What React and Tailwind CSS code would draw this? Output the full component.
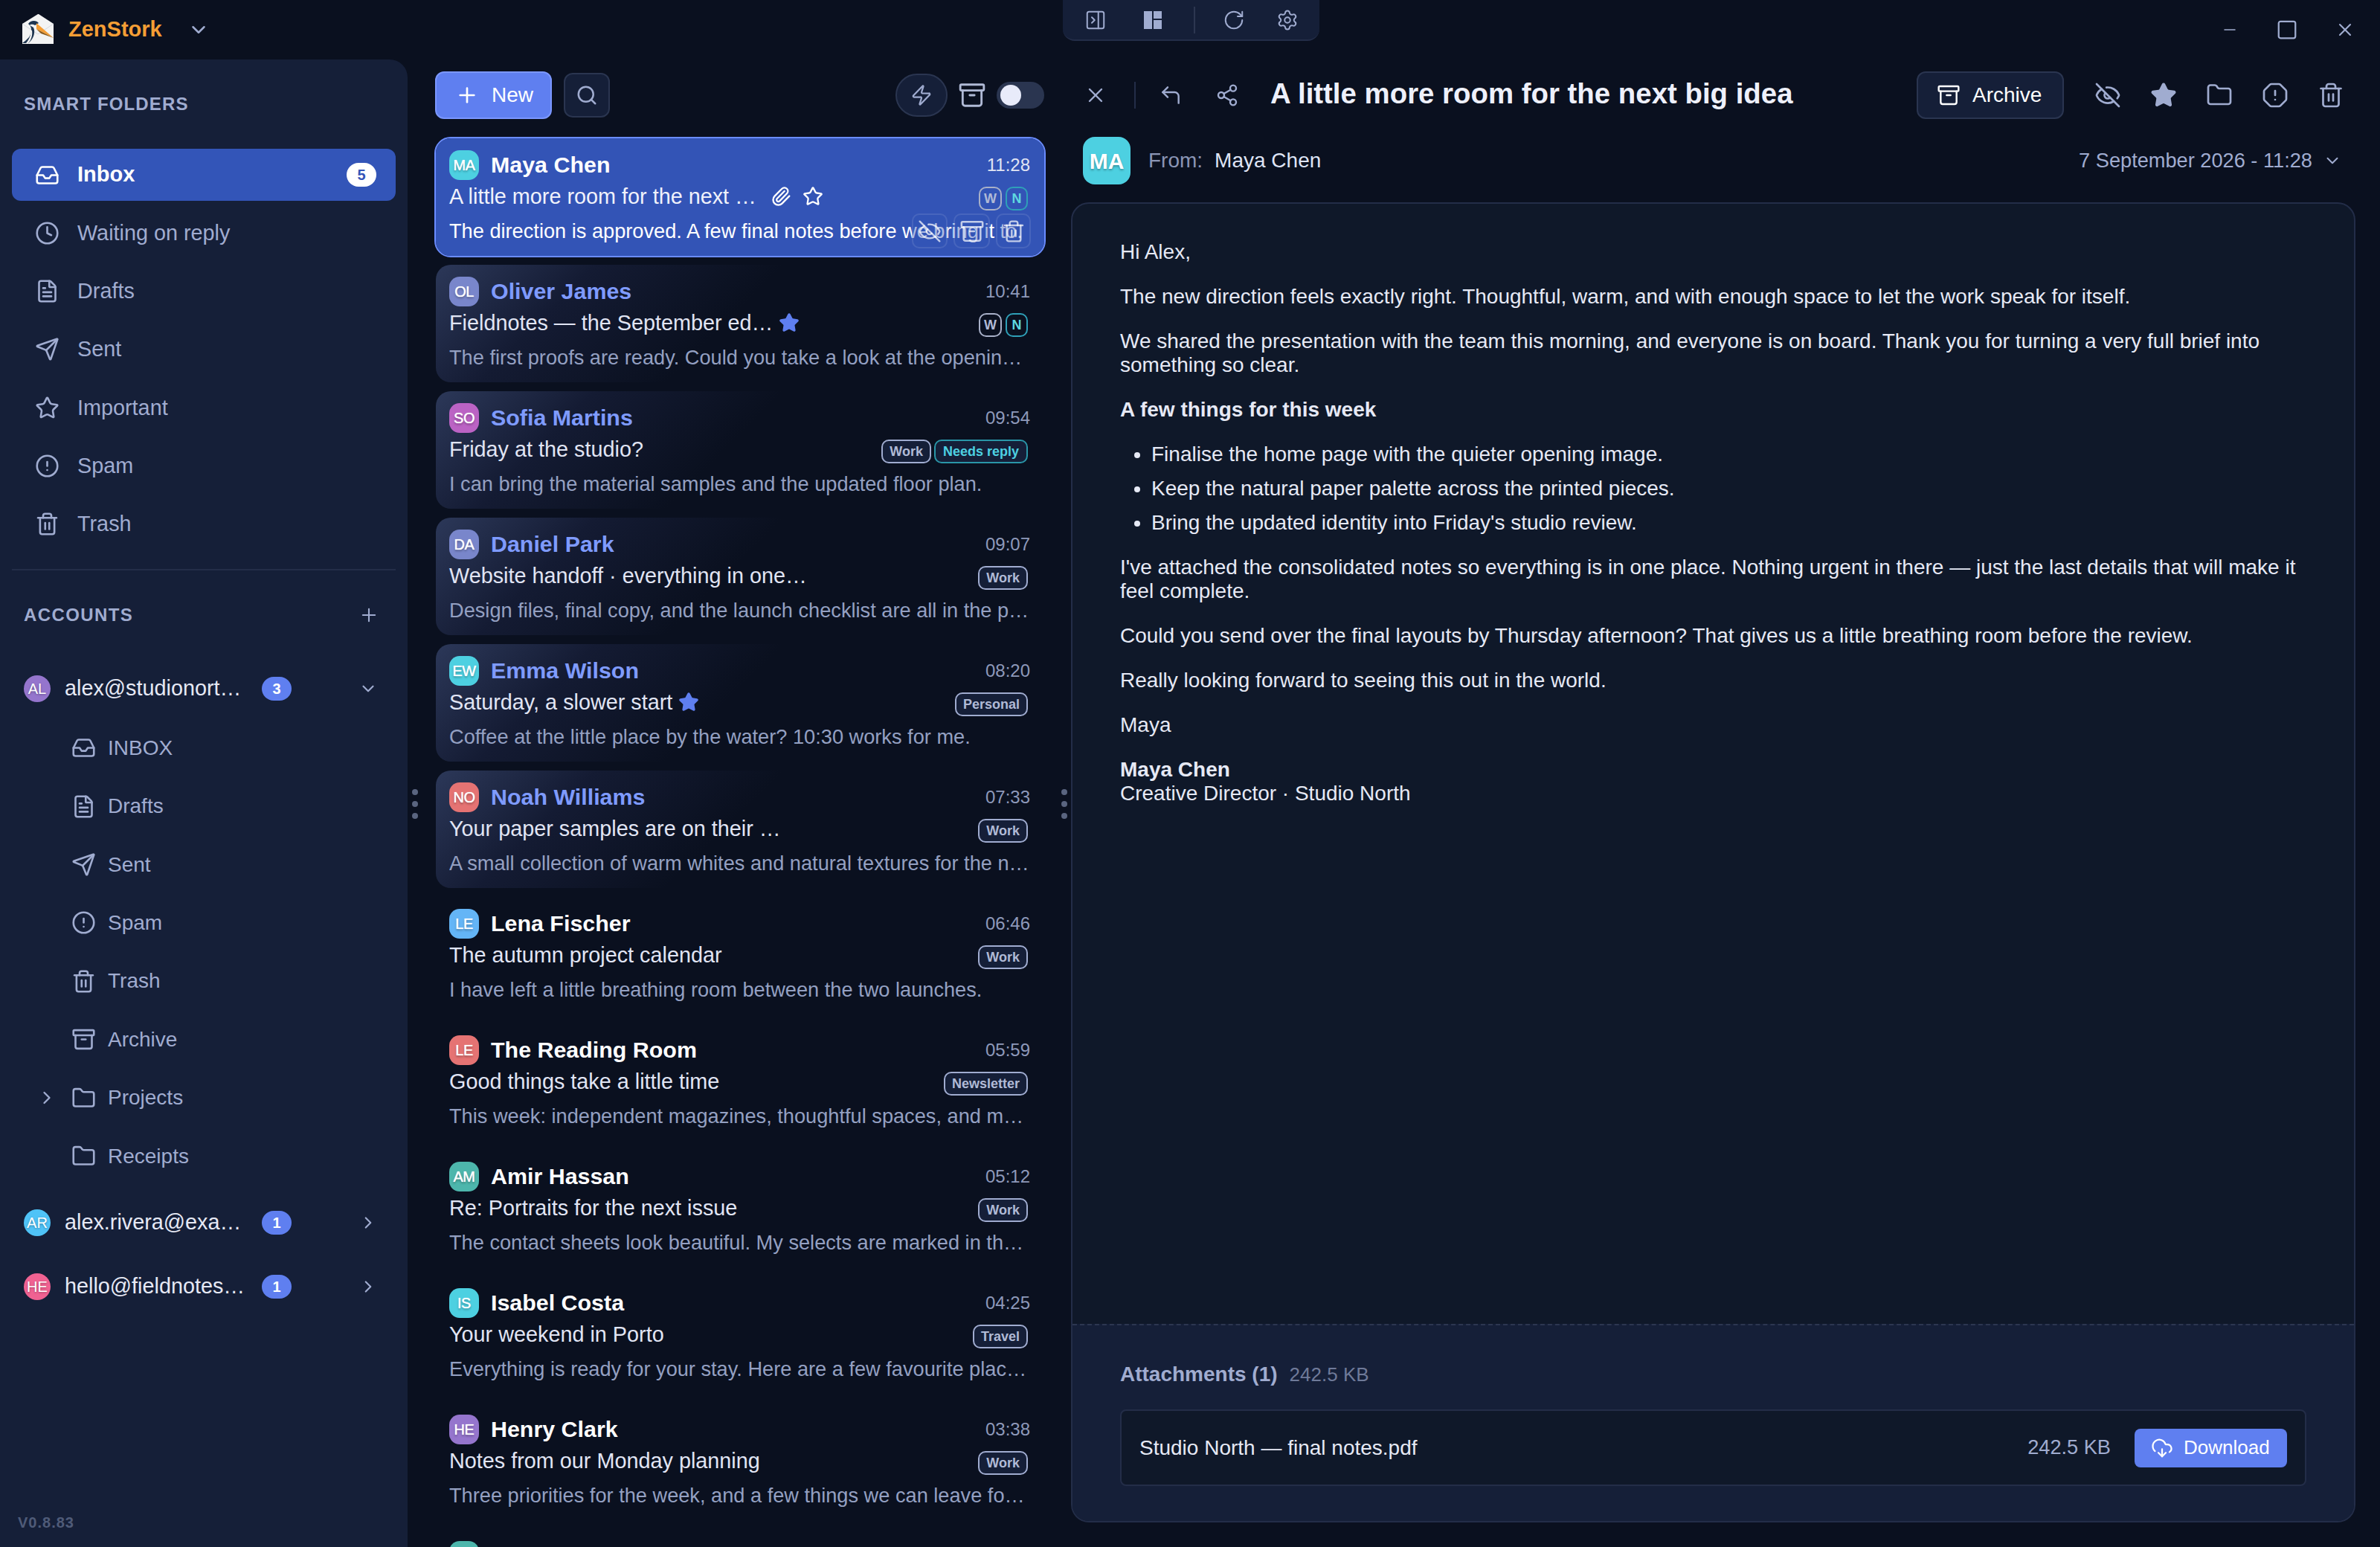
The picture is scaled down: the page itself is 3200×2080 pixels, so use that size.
import React from 'react';
import {
  Archive, ChevronDown, ChevronRight, CircleAlert, Clock, CloudDownload, CornerUpLeft, EyeOff, FileText, Folder,
  Inbox, Minus, OctagonAlert, PanelRightClose, Paperclip, Plus, RotateCw, Search, Send, Settings, Share2, Square,
  Star, Trash2, X, Zap,
} from 'lucide-react';

const smartFolders = [
  { label: 'Waiting on reply', icon: Clock },
  { label: 'Drafts', icon: FileText },
  { label: 'Sent', icon: Send },
  { label: 'Important', icon: Star },
  { label: 'Spam', icon: CircleAlert },
  { label: 'Trash', icon: Trash2 },
];

const accountFolders = [
  { label: 'INBOX', icon: Inbox },
  { label: 'Drafts', icon: FileText },
  { label: 'Sent', icon: Send },
  { label: 'Spam', icon: CircleAlert },
  { label: 'Trash', icon: Trash2 },
  { label: 'Archive', icon: Archive },
  { label: 'Projects', icon: Folder, expandable: true },
  { label: 'Receipts', icon: Folder },
];

const emails = [
  { id: 2, name: 'Oliver James', initials: 'OL', color: 'bg-[#7986cb]', time: '10:41', subject: 'Fieldnotes — the September ed…', preview: 'The first proofs are ready. Could you take a look at the openin…', unread: true, star: true, chips: true },
  { id: 3, name: 'Sofia Martins', initials: 'SO', color: 'bg-[#bb63c4]', time: '09:54', subject: 'Friday at the studio?', preview: 'I can bring the material samples and the updated floor plan.', unread: true, tags: ['Work', 'Needs reply'] },
  { id: 4, name: 'Daniel Park', initials: 'DA', color: 'bg-[#7986cb]', time: '09:07', subject: 'Website handoff · everything in one…', preview: 'Design files, final copy, and the launch checklist are all in the p…', unread: true, tags: ['Work'] },
  { id: 5, name: 'Emma Wilson', initials: 'EW', color: 'bg-[#4dd0e1]', time: '08:20', subject: 'Saturday, a slower start', preview: 'Coffee at the little place by the water? 10:30 works for me.', unread: true, star: true, tags: ['Personal'] },
  { id: 6, name: 'Noah Williams', initials: 'NO', color: 'bg-[#e57373]', time: '07:33', subject: 'Your paper samples are on their …', preview: 'A small collection of warm whites and natural textures for the n…', unread: true, tags: ['Work'] },
  { id: 7, name: 'Lena Fischer', initials: 'LE', color: 'bg-[#64b5f6]', time: '06:46', subject: 'The autumn project calendar', preview: 'I have left a little breathing room between the two launches.', tags: ['Work'] },
  { id: 8, name: 'The Reading Room', initials: 'LE', color: 'bg-[#e57373]', time: '05:59', subject: 'Good things take a little time', preview: 'This week: independent magazines, thoughtful spaces, and m…', tags: ['Newsletter'] },
  { id: 9, name: 'Amir Hassan', initials: 'AM', color: 'bg-[#4db6ac]', time: '05:12', subject: 'Re: Portraits for the next issue', preview: 'The contact sheets look beautiful. My selects are marked in th…', tags: ['Work'] },
  { id: 10, name: 'Isabel Costa', initials: 'IS', color: 'bg-[#4dd0e1]', time: '04:25', subject: 'Your weekend in Porto', preview: 'Everything is ready for your stay. Here are a few favourite plac…', tags: ['Travel'] },
  { id: 11, name: 'Henry Clark', initials: 'HE', color: 'bg-[#9575cd]', time: '03:38', subject: 'Notes from our Monday planning', preview: 'Three priorities for the week, and a few things we can leave fo…', tags: ['Work'] },
];

function Logo() {
  return (
    <svg width="46" height="44" viewBox="0 0 46 44">
      <path d="M1 14 22 1l1 0 20 13v27H1z" fill="#f3f3f3" />
      <path d="M1 14l21 14 21-14" fill="none" stroke="#d5d8de" strokeWidth="1" />
      <path d="M9 14c3-5 11-5 14-1l-5 3c-4-2-6-1-7 0z" fill="#1e3550" />
      <path d="M11 16c3 4 3 10-1 16-3 3-6 6-9 8h8c5-4 9-10 8-18l-1-3z" fill="#1e3550" />
      <path d="M12 22c1 6-1 12-6 18h3c4-4 6-11 5-17z" fill="#f3f3f3" />
      <path d="M20 13 43 33 20 21z" fill="#f59e35" />
      <path d="M20 21 43 33 26 27z" fill="#8a5a1c" />
    </svg>
  );
}

function Dots({ className }) {
  return (
    <div className={`flex flex-col gap-2 ${className}`}>
      <span className="w-2 h-2 rounded-full bg-[#5a6580]" />
      <span className="w-2 h-2 rounded-full bg-[#5a6580]" />
      <span className="w-2 h-2 rounded-full bg-[#5a6580]" />
    </div>
  );
}

function TitleBar() {
  return (
    <div className="h-[80px] flex shrink-0">
      <div className="w-[1429px] flex items-center pl-[29px]">
        <Logo />
        <span className="ml-[17px] text-[29px] font-bold text-[#f59e35]">ZenStork</span>
        <ChevronDown className="ml-[34px] text-[#a0acd0]" size={30} strokeWidth={2} />
      </div>
      <div className="w-[345px] h-[55px] flex items-center bg-[#151f38] border-b-2 border-[#232d48] rounded-b-2xl text-[#a0acd0]">
        <PanelRightClose className="ml-[29px]" size={30} strokeWidth={1.6} />
        <svg className="ml-[47px]" width="30" height="30" viewBox="0 0 30 30" fill="currentColor">
          <rect x="3" y="3" width="11" height="24" />
          <rect x="16" y="3" width="11" height="10" />
          <rect x="16" y="15" width="11" height="12" />
        </svg>
        <div className="ml-[40px] w-[2px] h-[36px] bg-[#2c3650]" />
        <RotateCw className="ml-[37px]" size={30} strokeWidth={1.6} />
        <Settings className="ml-[42px]" size={30} strokeWidth={1.6} />
      </div>
      <div className="flex-1 flex items-center justify-end pr-[33px] text-[#a0acd0]">
        <Minus size={24} strokeWidth={1.5} />
        <Square className="ml-[50px]" size={30} strokeWidth={1.8} />
        <X className="ml-[49px]" size={28} strokeWidth={1.8} />
      </div>
    </div>
  );
}

function Sidebar() {
  return (
    <aside className="relative w-[548px] shrink-0 bg-[#151f38] rounded-tr-3xl px-4 text-[#a0acd0]">
      <div className="h-[120px] flex items-center pl-4 text-[24px] font-bold tracking-[1.15px]">SMART FOLDERS</div>
      <div className="h-[70px] mb-[8.3px] flex items-center rounded-xl bg-[#3355b8] pl-[31px] pr-[26px] text-white">
        <Inbox size={33} strokeWidth={1.9} />
        <span className="ml-[24px] text-[29px] font-bold">Inbox</span>
        <span className="ml-auto w-[40px] h-[32px] rounded-full bg-white text-[#3355b8] text-[20px] font-bold flex items-center justify-center">5</span>
      </div>
      {smartFolders.map(({ label, icon: Icon }) => (
        <div key={label} className="h-[70px] mb-[8.3px] flex items-center pl-[31px] text-[28.8px]">
          <Icon size={33} strokeWidth={1.9} />
          <span className="ml-[24px]">{label}</span>
        </div>
      ))}
      <div className="mt-[25px] h-[2px] bg-[#232d48]" />
      <div className="h-[124px] flex items-center pl-4 pr-[22px] pb-[4px] text-[24px] font-bold tracking-[1.4px]">
        ACCOUNTS
        <Plus className="ml-auto" size={28} strokeWidth={1.8} />
      </div>
      <Account initials="AL" color="bg-[#9575cd]" email="alex@studionort…" count={3} open />
      <div className="pt-[10px]">
        {accountFolders.map(({ label, icon: Icon, expandable }) => (
          <div key={label} className="relative h-[70px] mb-[8.4px] flex items-center pl-[80px] text-[28px]">
            {expandable && <ChevronRight className="absolute left-[33px]" size={28} />}
            <Icon size={33} strokeWidth={1.9} />
            <span className="ml-[16px]">{label}</span>
          </div>
        ))}
      </div>
      <div className="mt-[19px]">
        <Account initials="AR" color="bg-[#4fc3f7]" email="alex.rivera@exa…" count={1} />
      </div>
      <div className="mt-[16px]">
        <Account initials="HE" color="bg-[#f06292]" email="hello@fieldnotes…" count={1} />
      </div>
      <div className="absolute left-6 bottom-[18px] text-[20px] font-bold tracking-[1px] text-[#4f5b78]">V0.8.83</div>
      <Dots className="absolute left-[554px] top-[981px]" />
    </aside>
  );
}

function Account({ initials, color, email, count, open }) {
  return (
    <div className="h-[70px] flex items-center pl-4 pr-[24px]">
      <span className={`w-9 h-9 rounded-full ${color} text-white text-[20px] flex items-center justify-center shrink-0 [text-shadow:0_1px_3px_rgba(0,0,0,0.35)]`}>{initials}</span>
      <span className="ml-[19px] w-[265px] text-[28.8px] text-[#e6e9f5] whitespace-nowrap">{email}</span>
      <span className="w-[40px] h-[32px] rounded-full bg-[#5f7ff0] text-white text-[20px] font-bold flex items-center justify-center">{count}</span>
      {open
        ? <ChevronDown className="ml-auto" size={26} />
        : <ChevronRight className="ml-auto" size={26} />}
    </div>
  );
}

function Avatar({ initials, color }) {
  return (
    <span className={`w-10 h-10 rounded-[14px] ${color} text-white text-[20px] flex items-center justify-center shrink-0 tracking-[-0.5px] [text-shadow:0_0_1px_#fff,0_2px_3px_rgba(0,0,0,0.35)]`}>
      {initials}
    </span>
  );
}

function Tag({ label }) {
  const teal = label === 'Needs reply';
  return (
    <span className={`h-[32px] rounded-[10px] border-2 bg-[#151f38] text-[18px] font-bold flex items-center ${teal ? 'px-[10px] border-[#2a96a8] text-[#4dd0e1]' : 'px-[9px] border-[#a0acd0] text-[#b0bad6]'}`}>
      {label}
    </span>
  );
}

function Chips() {
  return (
    <div className="flex gap-[5px]">
      <span className="w-[31px] h-[32px] rounded-[10px] border-2 border-[#a8b0c8] text-[#b0bad6] text-[18px] font-bold flex items-center justify-center">W</span>
      <span className="w-[30px] h-[32px] rounded-[10px] border-2 border-[#2fa0b8] text-[#5fd8e0] text-[18px] font-bold flex items-center justify-center">N</span>
    </div>
  );
}

function EmailCard({ email }) {
  const { name, initials, color, time, subject, preview, unread, star, tags, chips } = email;
  return (
    <div className={`h-[158px] shrink-0 rounded-[20px] px-[18px] pt-4 ${unread ? 'bg-[linear-gradient(135deg,#2c3859_0%,#141b33_22%,transparent_48%)]' : ''}`}>
      <div className="h-10 flex items-center">
        <Avatar initials={initials} color={color} />
        <span className={`ml-4 text-[30.4px] font-bold ${unread ? 'text-[#7f9bff]' : 'text-white'}`}>{name}</span>
        <span className="ml-auto text-[24px] text-[#8e99ba] pr-px">{time}</span>
      </div>
      <div className="h-[44px] flex items-center">
        <span className="text-[28.8px] text-[#e1e5f4] whitespace-nowrap pt-[1px]">{subject}</span>
        {star && <Star className="ml-2 text-[#5f7ff0]" size={28} fill="currentColor" />}
        <div className="ml-auto flex gap-1 pr-[4px] pt-[6px]">
          {chips ? <Chips /> : tags.map((tag) => <Tag key={tag} label={tag} />)}
        </div>
      </div>
      <div className="h-[50px] flex items-center text-[27.2px] text-[#94a0c2] whitespace-nowrap overflow-hidden">{preview}</div>
    </div>
  );
}

function SelectedCard() {
  return (
    <div className="relative h-[158px] shrink-0 rounded-[20px] px-[18px] pt-4 bg-[#3354b6] outline-2 outline-[#6a8cff]">
      <div className="h-10 flex items-center">
        <Avatar initials="MA" color="bg-[#4dd0e1]" />
        <span className="ml-4 text-[30.4px] font-bold text-white">Maya Chen</span>
        <span className="ml-auto text-[24px] text-[#e1e5f4] pr-px">11:28</span>
      </div>
      <div className="h-[44px] flex items-center">
        <span className="text-[28.8px] text-[#f0f2fb] whitespace-nowrap pt-[1px]">A little more room for the next …</span>
        <Paperclip className="ml-[19px] text-white" size={28} />
        <Star className="ml-[15px] text-white" size={28} />
        <div className="ml-auto pr-[4px] pt-[6px]"><Chips /></div>
      </div>
      <div className="h-[50px] flex items-center text-[27.2px] text-white whitespace-nowrap overflow-hidden">The direction is approved. A few final notes before we bring it to.</div>
      <div className="absolute right-[18px] bottom-[10px] flex gap-2 text-white/70">
        <button className="w-[48px] h-[47px] rounded-[10px] border-2 border-white/10 bg-[#3354b6]/40 flex items-center justify-center"><EyeOff size={32} strokeWidth={1.8} /></button>
        <button className="w-[49px] h-[47px] rounded-[10px] border-2 border-white/10 bg-[#3354b6]/40 flex items-center justify-center"><Archive size={34} strokeWidth={1.8} /></button>
        <button className="w-[47px] h-[47px] rounded-[10px] border-2 border-white/10 bg-[#3354b6]/40 flex items-center justify-center"><Trash2 size={32} strokeWidth={1.8} /></button>
      </div>
    </div>
  );
}

function EmailList() {
  return (
    <section className="relative w-[892px] shrink-0 pl-[38px] pr-[36px] pt-4 flex flex-col overflow-hidden">
      <div className="h-[64px] flex items-center shrink-0">
        <button className="w-[157px] h-[64px] rounded-xl bg-[#5f7ff0] border-2 border-[#7b97ff] text-white text-[28px] flex items-center pl-[25px] ml-[-1px]">
          <Plus size={32} strokeWidth={2} />
          <span className="ml-[17px]">New</span>
        </button>
        <button className="ml-4 w-[62px] h-[60px] rounded-xl bg-[#151f38] border-2 border-[#2a3550] text-[#a0acd0] flex items-center justify-center"><Search size={30} strokeWidth={2} /></button>
        <button className="ml-auto w-[70px] h-[58px] rounded-full bg-[#151f38] border-2 border-[#2a3550] text-[#a0acd0] flex items-center justify-center"><Zap size={30} strokeWidth={1.8} /></button>
        <Archive className="ml-[14px] text-[#b0bad6]" size={38} strokeWidth={1.8} />
        <div className="ml-[14px] w-[64px] h-[36px] rounded-full bg-[#2a3550] flex items-center pl-[5px]"><span className="w-[28px] h-[28px] rounded-full bg-[#e8ebfa]" /></div>
      </div>
      <div className="mt-[26px] flex flex-col gap-3">
        <SelectedCard />
        {emails.map((email) => <EmailCard key={email.id} email={email} />)}
        <div className="h-[158px] shrink-0 px-[18px] pt-4"><Avatar initials="" color="bg-[#4db6ac]" /></div>
      </div>
      <Dots className="absolute right-[5px] top-[981px]" />
    </section>
  );
}

function Reader() {
  return (
    <section className="flex-1 min-w-0 pr-[33px] pt-4 flex flex-col text-[#a0acd0]">
      <div className="h-[64px] flex items-center shrink-0">
        <X className="ml-[17px]" size={32} strokeWidth={1.8} />
        <div className="ml-[36px] w-[2px] h-[36px] bg-[#232d48]" />
        <CornerUpLeft className="ml-[31px]" size={32} strokeWidth={1.8} />
        <Share2 className="ml-[44px]" size={32} strokeWidth={1.8} />
        <h1 className="ml-[42px] pb-[4px] text-[38.4px] font-bold text-[#eef0fb] whitespace-nowrap">A little more room for the next big idea</h1>
        <button className="ml-auto w-[198px] h-[64px] rounded-xl bg-[#151f38] border-2 border-[#2a3550] text-white text-[28px] flex items-center pl-[25px]">
          <Archive size={32} strokeWidth={1.8} />
          <span className="ml-[16px]">Archive</span>
        </button>
        <EyeOff className="ml-[41px]" size={36} strokeWidth={1.8} />
        <Star className="ml-[39px]" size={36} fill="currentColor" />
        <Folder className="ml-[39px]" size={36} strokeWidth={1.8} />
        <OctagonAlert className="ml-[39px]" size={36} strokeWidth={1.8} />
        <Trash2 className="ml-[39px] mr-[15px]" size={36} strokeWidth={1.8} />
      </div>
      <div className="mt-[24px] h-[64px] flex items-center shrink-0 pl-4 text-[28px]">
        <span className="w-16 h-16 rounded-2xl bg-[#4dd0e1] text-white text-[30px] font-bold flex items-center justify-center [text-shadow:0_2px_3px_rgba(0,0,0,0.3)]">MA</span>
        <span className="ml-6 text-[#8a95b5]">From:</span>
        <span className="ml-4 text-[#dfe4f5]">Maya Chen</span>
        <span className="ml-auto text-[27.2px]">7 September 2026 - 11:28</span>
        <ChevronDown className="ml-[14px] mr-[18px]" size={26} strokeWidth={1.8} />
      </div>
      <div className="mt-[24px] h-[1775px] rounded-3xl border-2 border-[#232d48] bg-[#0f1829] flex flex-col overflow-hidden">
        <div className="flex-1 pl-[64px] pr-[66px] pt-[49px] text-[28px] leading-[32px] text-[#e6e9f5]">
          <p className="mb-[28px]">Hi Alex,</p>
          <p className="mb-[28px]">The new direction feels exactly right. Thoughtful, warm, and with enough space to let the work speak for itself.</p>
          <p className="mb-[28px]">We shared the presentation with the team this morning, and everyone is on board. Thank you for turning a very full brief into something so clear.</p>
          <p className="mb-[28px] font-bold">A few things for this week</p>
          <ul className="mb-[28px] pl-[42px] list-disc flex flex-col gap-[14px]">
            <li>Finalise the home page with the quieter opening image.</li>
            <li>Keep the natural paper palette across the printed pieces.</li>
            <li>Bring the updated identity into Friday's studio review.</li>
          </ul>
          <p className="mb-[28px]">I've attached the consolidated notes so everything is in one place. Nothing urgent in there — just the last details that will make it feel complete.</p>
          <p className="mb-[28px]">Could you send over the final layouts by Thursday afternoon? That gives us a little breathing room before the review.</p>
          <p className="mb-[28px]">Really looking forward to seeing this out in the world.</p>
          <p className="mb-[28px]">Maya</p>
          <p><span className="font-bold">Maya Chen</span><br />Creative Director · Studio North</p>
        </div>
        <div className="h-[265px] shrink-0 border-t-2 border-dashed border-[#2c3650] bg-[#151f38] px-[64px] pt-[50px]">
          <div className="h-8 flex items-center">
            <span className="text-[28px] font-bold text-[#a0acd0]">Attachments (1)</span>
            <span className="ml-4 text-[26px] text-[#6f7a99]">242.5 KB</span>
          </div>
          <div className="mt-[31px] h-[103px] rounded-lg border-2 border-[#232d48] bg-[#0f1829] flex items-center pl-[24px] pr-[24px]">
            <span className="text-[28px] text-[#e6e9f5]">Studio North — final notes.pdf</span>
            <span className="ml-auto text-[27.2px] text-[#a0acd0]">242.5 KB</span>
            <button className="ml-[32px] w-[205px] h-[52px] rounded-lg bg-[#5f7ff0] text-white text-[26px] flex items-center pl-[22px]">
              <CloudDownload size={30} strokeWidth={1.8} />
              <span className="ml-[14px]">Download</span>
            </button>
          </div>
        </div>
      </div>
    </section>
  );
}

export default function App() {
  return (
    <div className="w-[3200px] h-[2080px] overflow-hidden bg-[#0a101f] flex flex-col font-['Liberation_Sans',Arial,sans-serif]">
      <TitleBar />
      <div className="flex flex-1 min-h-0">
        <Sidebar />
        <EmailList />
        <Reader />
      </div>
    </div>
  );
}
